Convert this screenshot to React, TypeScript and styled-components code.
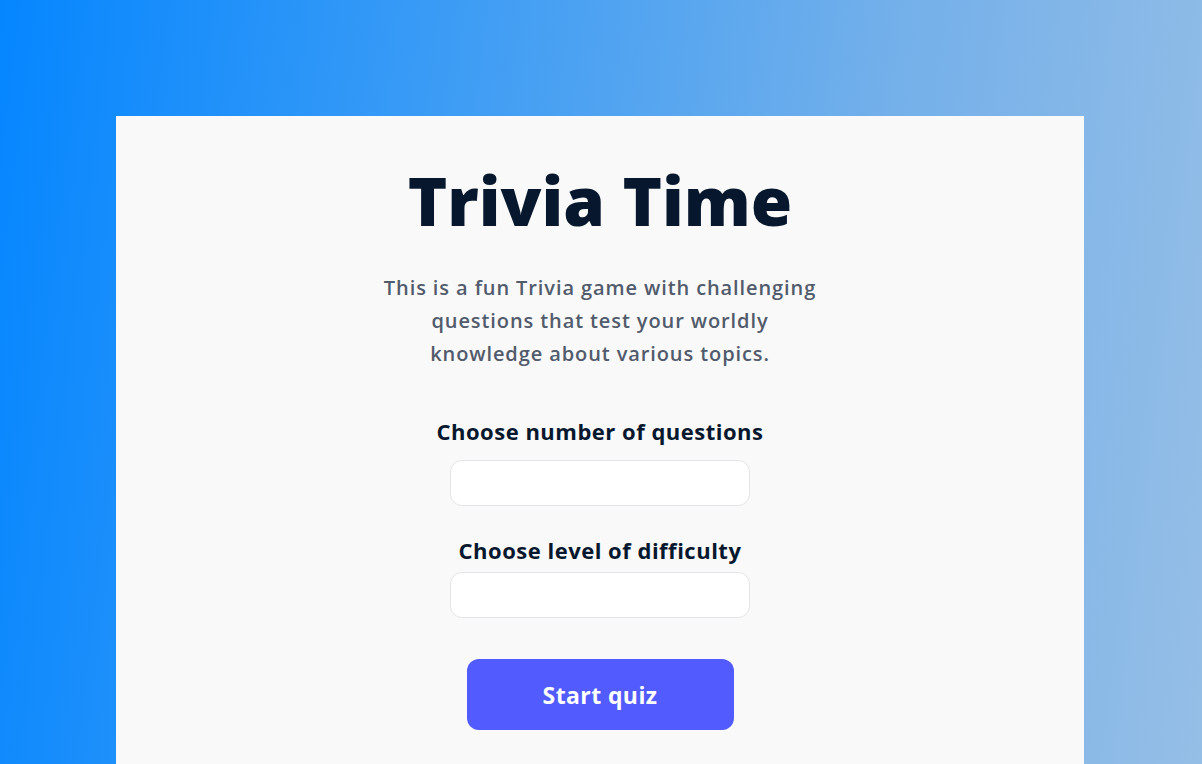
import React from "react";
import styled, { createGlobalStyle } from "styled-components";

const Global = createGlobalStyle`
  html, body { margin: 0; padding: 0; height: 100%; }
  body {
    font-family: "Open Sans", "Liberation Sans", sans-serif;
    background: linear-gradient(97deg, #0586ff 0%, #3c9cf5 35%, #74b0ea 70%, #95bee6 100%);
    background-attachment: fixed;
    min-height: 764px;
    overflow: hidden;
  }
`;

const Page = styled.main`
  padding: 116px 118px 0 116px;
  display: flex;
`;

const Card = styled.section`
  flex: 1;
  min-height: 700px;
  background: #f9f9f9;
  display: flex;
  flex-direction: column;
  align-items: center;
  padding-top: 42px;
  box-sizing: border-box;
`;

const Title = styled.h1`
  margin: 0;
  font-size: 67px;
  line-height: 84px;
  font-weight: 800;
  color: #07182e;
`;

const Intro = styled.p`
  margin: 29px 0 0;
  width: 440px;
  text-align: center;
  font-size: 20px;
  line-height: 33px;
  font-weight: 600;
  letter-spacing: 0.9px;
  color: #525b6c;
`;

const Form = styled.form`
  margin-top: 46px;
  display: flex;
  flex-direction: column;
  align-items: center;
`;

const Field = styled.div<{ $gap?: number }>`
  display: flex;
  flex-direction: column;
  align-items: center;
  margin-top: ${(p) => p.$gap ?? 0}px;
`;

const Label = styled.label<{ $tight?: boolean }>`
  font-size: 22px;
  line-height: 30px;
  font-weight: 700;
  letter-spacing: 0.5px;
  color: #07182e;
  margin-bottom: ${(p) => (p.$tight ? 7 : 14)}px;
`;

const Input = styled.input`
  width: 300px;
  height: 46px;
  box-sizing: border-box;
  border: 1px solid #e4e4e8;
  border-radius: 12px;
  background: #ffffff;
  outline: none;
`;

const Button = styled.button`
  margin-top: 41px;
  width: 267px;
  height: 71px;
  border: none;
  border-radius: 12px;
  background: #525bfe;
  color: #ffffff;
  font-family: inherit;
  font-size: 23px;
  font-weight: 700;
  letter-spacing: 0.4px;
  cursor: pointer;
`;

export default function App() {
  return (
    <>
      <Global />
      <Page>
        <Card>
          <Title>Trivia Time</Title>
          <Intro>
            This is a fun Trivia game with challenging questions that test your worldly
            knowledge about various topics.
          </Intro>
          <Form onSubmit={(e) => e.preventDefault()}>
            <Field>
              <Label htmlFor="count">Choose number of questions</Label>
              <Input id="count" type="text" />
            </Field>
            <Field $gap={29}>
              <Label htmlFor="level" $tight>
                Choose level of difficulty
              </Label>
              <Input id="level" type="text" />
            </Field>
            <Button type="submit">Start quiz</Button>
          </Form>
        </Card>
      </Page>
    </>
  );
}
